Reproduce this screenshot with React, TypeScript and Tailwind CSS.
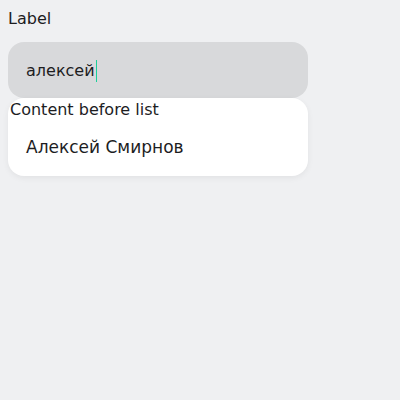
import React from 'react';

export default function App() {
  return (
    <div className="min-h-screen w-full bg-[#eff0f2] p-2 font-['DejaVu_Sans',sans-serif] text-[#1d1d1f]">
      <div className="w-[300px]">
        <div className="text-[16px] leading-[20px] mt-[1px]">Label</div>
        <div className="mt-[13px] h-[56px] rounded-[16px] bg-[#d8d9db] flex items-center pl-[18px] text-[16px]">
          <span className="pt-[2px]">алексей</span>
          <span className="ml-[1px] mt-[2px] h-[22px] w-[1px] bg-[#1ccf9a]" />
        </div>
        <div className="h-[78px] rounded-[16px] bg-white shadow-[0_2px_6px_rgba(0,0,0,0.06)]">
          <div className="pl-[2px] pt-[2px] text-[16px] leading-[20px]">Content before list</div>
          <div className="pl-[18px] pt-[16px] text-[17px] leading-[22px]">Алексей Смирнов</div>
        </div>
      </div>
    </div>
  );
}
